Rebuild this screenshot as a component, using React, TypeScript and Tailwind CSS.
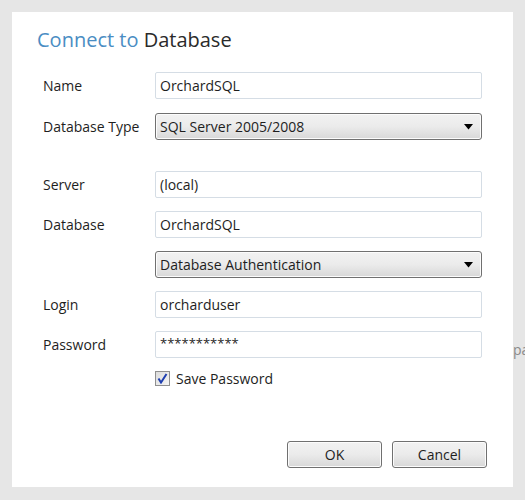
import React from "react";

const font = { fontFamily: '"Open Sans", "Noto Sans", sans-serif' };

function TextBox({ value }: { value: string }) {
  return (
    <div className="h-[27px] w-[327px] rounded-[2px] border border-[#d5dde5] bg-white pl-[4px] text-[14px] leading-[25px] text-[#1e1e1e]">
      {value}
    </div>
  );
}

function Select({ value }: { value: string }) {
  return (
    <div className="flex h-[27px] w-[327px] items-center justify-between rounded-[3px] border border-[#707070] bg-gradient-to-b from-[#f2f2f2] via-[#ebebeb] to-[#d8d8d8] pl-[4px] pr-[8px] text-[14px] text-[#1e1e1e] shadow-[inset_0_0_0_1px_#fcfcfc]">
      <span className="leading-[25px]">{value}</span>
      <svg width="9" height="6" viewBox="0 0 9 6">
        <path d="M0 0 H9 L4.5 5.5 Z" fill="#000" />
      </svg>
    </div>
  );
}

function Row({ label, children }: { label?: string; children: React.ReactNode }) {
  return (
    <div className="flex items-center">
      <div className="w-[112px] text-[14px] text-[#1e1e1e]">{label}</div>
      {children}
    </div>
  );
}

function Btn({ label }: { label: string }) {
  return (
    <div className="flex h-[27px] w-[95px] items-center justify-center rounded-[3px] border border-[#707070] bg-gradient-to-b from-[#f2f2f2] via-[#ebebeb] to-[#d8d8d8] text-[14px] text-[#1e1e1e] shadow-[inset_0_0_0_1px_#fcfcfc]">
      {label}
    </div>
  );
}

export default function App() {
  return (
    <div className="relative h-[500px] w-[525px] overflow-hidden bg-[#e6e6e6] p-[12px]" style={font}>
      <div className="absolute left-[513px] top-[339px] text-[14px] text-[#8a8a8a]">pa</div>
      <div className="relative flex h-[475px] w-[501px] flex-col bg-white pl-[31px] pt-[14px]">
        <div className="-ml-[6px] text-[20px] leading-[28px] tracking-[0px]">
          <span className="text-[#4a8dc3]">Connect to </span>
          <span className="text-[#2a2a2a]">Database</span>
        </div>
        <div className="mt-[18px] flex flex-col gap-[14px]">
          <Row label="Name"><TextBox value="OrchardSQL" /></Row>
          <Row label="Database Type"><Select value="SQL Server 2005/2008" /></Row>
        </div>
        <div className="mt-[31px] flex flex-col gap-[13px]">
          <Row label="Server"><TextBox value="(local)" /></Row>
          <Row label="Database"><TextBox value="OrchardSQL" /></Row>
          <Row><Select value="Database Authentication" /></Row>
          <Row label="Login"><TextBox value="orcharduser" /></Row>
          <Row label="Password">
            <div className="h-[27px] w-[327px] rounded-[2px] border border-[#d5dde5] bg-white pl-[4px] text-[13px] leading-[22px] text-[#1e1e1e]">
              ***********
            </div>
          </Row>
        </div>
        <div className="ml-[112px] mt-[10px] flex items-center gap-[6px]">
          <div className="flex h-[15px] w-[15px] items-center justify-center border border-[#8f8f8f] bg-gradient-to-br from-[#dcdcdc] to-[#f4f4f4]">
            <svg width="11" height="11" viewBox="0 0 11 11">
              <path d="M1.5 5.5 L4 9.5 L9.5 1" fill="none" stroke="#1f3fb0" strokeWidth="2" />
            </svg>
          </div>
          <span className="text-[14px] text-[#1e1e1e]">Save Password</span>
        </div>
        <div className="mt-auto mb-[19px] mr-[26px] flex justify-end gap-[10px]">
          <Btn label="OK" />
          <Btn label="Cancel" />
        </div>
      </div>
    </div>
  );
}
